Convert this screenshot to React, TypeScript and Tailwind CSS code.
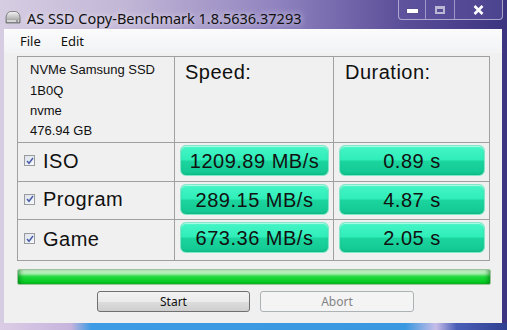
import React from 'react';

interface ResultRow {
  name: string;
  speed: string;
  duration: string;
  height: string;
}

const rows: ResultRow[] = [
  { name: 'ISO', speed: '1209.89 MB/s', duration: '0.89 s', height: 'h-[39px]' },
  { name: 'Program', speed: '289.15 MB/s', duration: '4.87 s', height: 'h-[38px]' },
  { name: 'Game', speed: '673.36 MB/s', duration: '2.05 s', height: 'h-[41px]' },
];

const DriveIcon = () => (
  <svg width="16" height="14" viewBox="0 0 16 14">
    <defs>
      <linearGradient id="drv" x1="0" y1="0" x2="0" y2="1">
        <stop offset="0" stopColor="#f4f4f4" />
        <stop offset="0.6" stopColor="#b8b8b8" />
        <stop offset="1" stopColor="#8a8a8a" />
      </linearGradient>
    </defs>
    <path d="M1 13 L1 7 Q2 1.5 6 1.5 L10 1.5 Q14 1.5 15 7 L15 13 Z" fill="url(#drv)" stroke="#6c6c6c" strokeWidth="0.8" />
    <rect x="2" y="10" width="12" height="2" fill="#d6d6d6" />
    <rect x="11" y="10.5" width="2" height="1" fill="#5f5f5f" />
  </svg>
);

const Pill = ({ text, className }: { text: string; className: string }) => (
  <div
    className={`${className} mt-[2px] flex items-center justify-center rounded-[6px] border border-[#7fe8c8] bg-[linear-gradient(to_bottom,#45f5c6_0%,#30eeb9_47%,#1bd49e_53%,#13c892_100%)] shadow-[inset_0_1px_1px_rgba(255,255,255,0.6),inset_0_-1px_2px_rgba(0,120,80,0.25)] text-[20px] tracking-[0.5px] text-[#111] [font-family:'Liberation_Sans',Arial,sans-serif]`}
  >
    {text}
  </div>
);

const CheckBox = () => (
  <div className="flex h-[11px] w-[11px] items-center justify-center border border-[#9a9b9c] bg-[linear-gradient(135deg,#dde2ec,#f7f9fc)]">
    <svg width="8" height="8" viewBox="0 0 8 8">
      <path d="M1 4 L3 6.3 L7 1" fill="none" stroke="#4a5fa8" strokeWidth="1.5" />
    </svg>
  </div>
);

export default function App() {
  return (
    <div className="flex h-[330px] w-[507px] flex-col overflow-hidden bg-[linear-gradient(to_right,#d6cde2_0%,#c2b6d6_25%,#8f82bf_55%,#5a4d98_80%,#3c3480_100%)]">
      {/* title bar */}
      <div className="flex h-[29px] shrink-0 items-start justify-between">
        <div className="mt-[9px] ml-[5px] flex items-center gap-[6px]">
          <DriveIcon />
          <span className="mt-[2px] text-[14.5px] leading-[14px] text-[#111] [font-family:'Noto_Sans',sans-serif] [text-shadow:0_0_6px_rgba(255,255,255,0.9)]">
            AS SSD Copy-Benchmark 1.8.5636.37293
          </span>
        </div>
        <div className="mr-[4px] flex h-[20px] rounded-b-[4px] border border-t-0 border-[rgba(230,225,245,0.6)] bg-[rgba(100,90,165,0.4)]">
          <div className="flex w-[27px] items-center justify-center border-r border-[rgba(230,225,245,0.5)]">
            <div className="mt-[3px] h-[4px] w-[11px] bg-white shadow-[0_0_1px_#333]" />
          </div>
          <div className="flex w-[29px] items-center justify-center border-r border-[rgba(230,225,245,0.5)]">
            <div className="h-[8px] w-[10px] border-[2px] border-t-[3px] border-[#bcb8d4]" />
          </div>
          <div className="flex w-[47px] items-center justify-center">
            <svg width="11" height="10" viewBox="0 0 11 10">
              <path d="M1.5 1 L9.5 9 M9.5 1 L1.5 9" stroke="#fff" strokeWidth="2.6" />
            </svg>
          </div>
        </div>
      </div>

      {/* client area */}
      <div className="ml-[4px] flex h-[294px] w-[498px] shrink-0 flex-col bg-[#f0f0f0]">
        <div className="flex h-[24px] items-center gap-[20px] bg-[linear-gradient(to_bottom,#fbfbfc,#f2f3f5)] pt-[2px] pl-[16px] text-[13px] text-[#111] [font-family:'Noto_Sans',sans-serif]">
          <span>File</span>
          <span>Edit</span>
        </div>

        <div className="mt-[3px] ml-[13px] flex w-[473px] flex-col border-t border-l border-[#a0a0a0]">
          <div className="flex h-[86px]">
            <div className="w-[157px] border-r border-b border-[#a0a0a0] pt-[3px] pl-[12px] text-[13px] leading-[20px] text-[#111] [font-family:'Liberation_Sans',Arial,sans-serif]">
              <div>NVMe Samsung SSD</div>
              <div className="mt-[1px]">1B0Q</div>
              <div>nvme</div>
              <div>476.94 GB</div>
            </div>
            <div className="w-[159px] border-r border-b border-[#a0a0a0] pt-[5px] pl-[10px] text-[20px] leading-[20px] tracking-[0.5px] text-[#111] [font-family:'Liberation_Sans',Arial,sans-serif]">
              Speed:
            </div>
            <div className="w-[156px] border-r border-b border-[#a0a0a0] pt-[5px] pl-[11px] text-[20px] leading-[20px] tracking-[0.5px] text-[#111] [font-family:'Liberation_Sans',Arial,sans-serif]">
              Duration:
            </div>
          </div>
          {rows.map((r) => (
            <div key={r.name} className={`flex ${r.height}`}>
              <div className="flex w-[157px] items-center gap-[8px] border-r border-b border-[#a0a0a0] pb-[3px] pl-[6px]">
                <CheckBox />
                <span className="text-[20px] tracking-[0.5px] text-[#111] [font-family:'Liberation_Sans',Arial,sans-serif]">
                  {r.name}
                </span>
              </div>
              <div className="w-[159px] border-r border-b border-[#a0a0a0] pr-[4px] pl-[5px]">
                <Pill text={r.speed} className="h-[31px]" />
              </div>
              <div className="w-[156px] border-r border-b border-[#a0a0a0] pr-[4px] pl-[5px]">
                <Pill text={r.duration} className="h-[31px]" />
              </div>
            </div>
          ))}
        </div>

        <div className="mt-[8px] ml-[13px] h-[16px] w-[474px] rounded-[2px] border border-[#9cc49c] bg-[linear-gradient(to_bottom,#d8f6d8_0%,#a8eeae_25%,#22d83e_48%,#0ccf28_75%,#08c020_100%)] shadow-[inset_4px_0_4px_-2px_rgba(0,110,20,0.6),inset_-4px_0_4px_-2px_rgba(0,110,20,0.6)]" />

        <div className="mt-[6px] ml-[93px] flex gap-[10px] text-[12px] [font-family:'Noto_Sans',sans-serif]">
          <button className="h-[21px] w-[153px] rounded-[3px] border border-[#707070] bg-[linear-gradient(to_bottom,#f2f2f2_0%,#ebebeb_50%,#dddddd_51%,#cfcfcf_100%)] text-[#111]">
            Start
          </button>
          <button className="h-[21px] w-[154px] rounded-[3px] border border-[#adb2b5] bg-[#f4f4f4] text-[#838383]">
            Abort
          </button>
        </div>
      </div>

      {/* bottom frame */}
      <div className="flex-1 bg-[linear-gradient(to_right,#dccde6_0%,#c6b4dc_14%,#3c9be4_18%,#3a98e0_80%,#c8bde8_86%,#4a60b8_90%,#2f3f90_100%)]" />
    </div>
  );
}
